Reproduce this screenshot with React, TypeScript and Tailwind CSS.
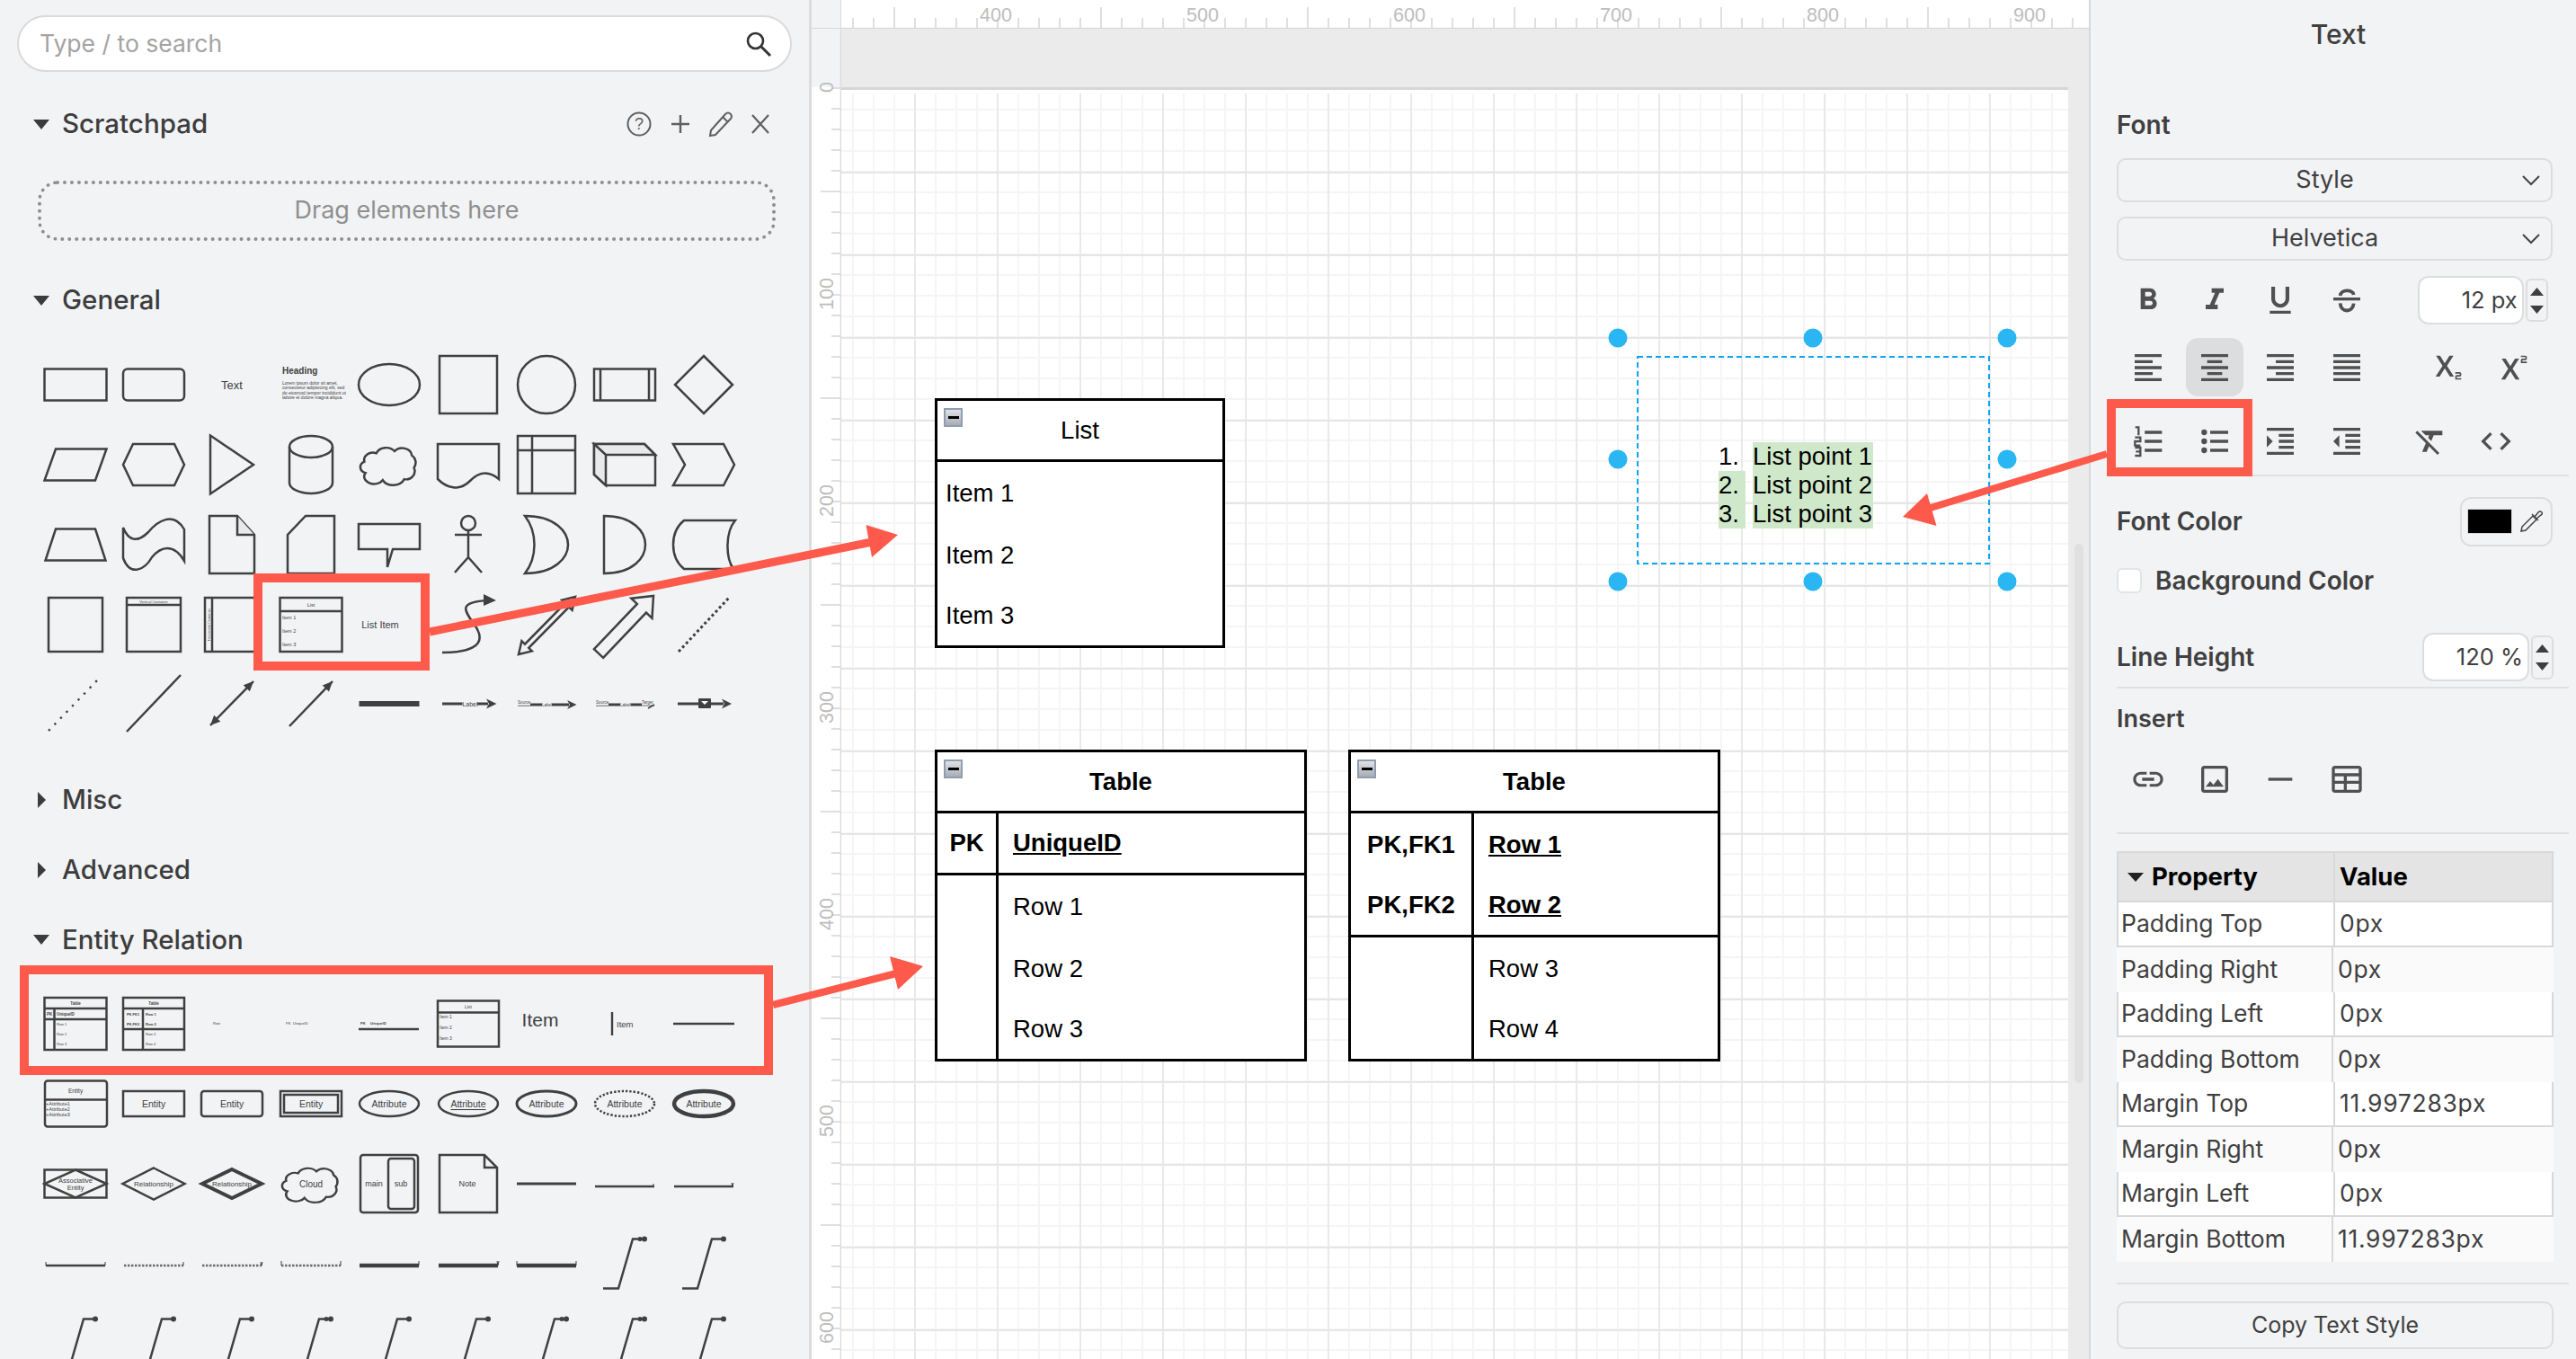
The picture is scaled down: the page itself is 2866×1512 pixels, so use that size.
import React from "react";

const INK = "#404040";
const RED = "#fd5a4c";
const SANS = "Liberation Sans, Arial, sans-serif";

function Lbl(p: { x?: number; y?: number; s: number; a?: "start" | "middle" | "end"; b?: boolean; u?: boolean; c?: string; children: React.ReactNode }) {
  return (
    <text x={p.x ?? 0} y={p.y ?? 0} fontSize={p.s} textAnchor={p.a ?? "middle"} fontWeight={p.b ? 700 : 400} textDecoration={p.u ? "underline" : undefined} fill={p.c ?? INK} stroke="none" fontFamily={SANS} dominantBaseline="central">
      {p.children}
    </text>
  );
}

function Cell({ children, w = 2.5 }: { children?: React.ReactNode; w?: number }) {
  return (
    <svg viewBox="-44 -44 88 88" width="88" height="88" fill="none" stroke={INK} strokeWidth={w} className="overflow-visible">
      {children}
    </svg>
  );
}

function head(x1: number, y1: number, x2: number, y2: number, l = 10, h = 5) {
  const d = Math.hypot(x2 - x1, y2 - y1);
  const ux = (x2 - x1) / d;
  const uy = (y2 - y1) / d;
  const bx = x2 - ux * l;
  const by = y2 - uy * l;
  return `${x2},${y2} ${bx - uy * h},${by + ux * h} ${bx + uy * h},${by - ux * h}`;
}

function Arw({ x1, y1, x2, y2, both }: { x1: number; y1: number; x2: number; y2: number; both?: boolean }) {
  return (
    <g>
      <line x1={x1} y1={y1} x2={x2} y2={y2} />
      <polygon points={head(x1, y1, x2, y2, 11, 5)} fill={INK} stroke="none" />
      {both && <polygon points={head(x2, y2, x1, y1, 11, 5)} fill={INK} stroke="none" />}
    </g>
  );
}

function block(x1: number, y1: number, x2: number, y2: number, sw: number, hw: number, hl: number, both: boolean) {
  const d = Math.hypot(x2 - x1, y2 - y1);
  const ux = (x2 - x1) / d;
  const uy = (y2 - y1) / d;
  const nx = -uy;
  const ny = ux;
  const pt = (t: number, n: number) => `${x1 + ux * t + nx * n},${y1 + uy * t + ny * n}`;
  const pts: string[] = [];
  if (both) {
    pts.push(pt(0, 0), pt(hl, hw), pt(hl, sw));
  } else {
    pts.push(pt(0, sw));
  }
  pts.push(pt(d - hl, sw), pt(d - hl, hw), pt(d, 0), pt(d - hl, -hw), pt(d - hl, -sw));
  if (both) {
    pts.push(pt(hl, -sw), pt(hl, -hw));
  } else {
    pts.push(pt(0, -sw));
  }
  return pts.join(" ");
}

const CLOUD = "M-12 -11 A10 9 0 0 1 5 -13 A9 8 0 0 1 21 -9 A7 8 0 0 1 23 3 A8 8 0 0 1 14 14 A11 9 0 0 1 -6 15 A9 7 0 0 1 -22 8 A7 6 0 0 1 -23 -3 A8 7 0 0 1 -12 -11Z";

const GENERAL: React.ReactNode[] = [
  <Cell><rect x={-34.5} y={-17.5} width={69} height={35} /></Cell>,
  <Cell><rect x={-34} y={-17.5} width={68} height={35} rx={5} /></Cell>,
  <Cell><Lbl s={13}>Text</Lbl></Cell>,
  <Cell>
    <Lbl x={-32} y={-16} s={10} a="start" b>Heading</Lbl>
    <Lbl x={-32} y={-2} s={5} a="start">Lorem ipsum dolor sit amet,</Lbl>
    <Lbl x={-32} y={3} s={5} a="start">consectetur adipisicing elit, sed</Lbl>
    <Lbl x={-32} y={8.5} s={5} a="start">do eiusmod tempor incididunt ut</Lbl>
    <Lbl x={-32} y={13.5} s={5} a="start">labore et dolore magna aliqua.</Lbl>
  </Cell>,
  <Cell><ellipse rx={34} ry={23} /></Cell>,
  <Cell><rect x={-32} y={-32} width={64} height={64} /></Cell>,
  <Cell><circle r={32} /></Cell>,
  <Cell><rect x={-34} y={-17.5} width={68} height={35} /><path d="M-27 -17.5V17.5M27 -17.5V17.5" /></Cell>,
  <Cell><path d="M0 -32L32 0L0 32L-32 0Z" /></Cell>,

  <Cell><path d="M-22 -17.5H34.5L22 17.5H-34.5Z" /></Cell>,
  <Cell><path d="M-23 -23H23L34 0L23 23H-23L-34 0Z" /></Cell>,
  <Cell><path d="M-24 -32.5L24 0L-24 32.5Z" /></Cell>,
  <Cell><path d="M-24 -20A24 12 0 0 1 24 -20V20A24 12 0 0 1 -24 20Z" /><path d="M-24 -20A24 12 0 0 0 24 -20" /></Cell>,
  <Cell><path d={CLOUD} transform="scale(1.2 1.15)" strokeWidth={2.1} /></Cell>,
  <Cell><path d="M-34 -23H34V16C22 6 12 8 2 18C-10 30 -24 26 -34 16Z" /></Cell>,
  <Cell><rect x={-32} y={-32} width={64} height={64} /><path d="M-16 -32V32M-32 -16H32" /></Cell>,
  <Cell><path d="M-34 -23H22L34 -11V23H-21L-34 11Z" /><path d="M-34 -23L-21 -11V23L-34 11Z M-34 -23H22L34 -11H-21Z" fill="#e8e9ea" /></Cell>,
  <Cell><path d="M-34 -23H22L34 0L22 23H-34L-21 0Z" /></Cell>,

  <Cell><path d="M-22 -17.5H22L33.5 17.5H-33.5Z" /></Cell>,
  <Cell><path d="M-34 -19C-28 -4 -18 -2 -6 -14C4 -26 22 -38 34 -17V18C22 -2 8 2 -2 14C-10 28 -26 36 -34 15Z" /></Cell>,
  <Cell><path d="M-25 -32H6L25 -11V32H-25Z" /><path d="M6 -32V-11H25" fill="#e8e9ea" /></Cell>,
  <Cell><path d="M-6 -32H26V32H-26V-11Z" /></Cell>,
  <Cell><path d="M-34 -23H34V5H4L-2 25L-2 5H-34Z" /></Cell>,
  <Cell><ellipse cy={-24} rx={8} ry={8} /><path d="M0 -16V14M-15 -11H15M0 14L-15 31M0 14L15 31" /></Cell>,
  <Cell><path d="M-24 -32C10 -32 24 -14 24 0C24 14 10 32 -24 32C-10 14 -10 -14 -24 -32Z" /></Cell>,
  <Cell><path d="M-23 -32C10 -32 23 -14 23 0C23 14 10 32 -23 32Z" /></Cell>,
  <Cell><path d="M-22 -27H35C24 -14 24 14 33 27H-22C-38 14 -38 -14 -22 -27Z" /></Cell>,

  <Cell><rect x={-30} y={-30} width={60} height={60} /></Cell>,
  <Cell><rect x={-30} y={-30} width={60} height={60} /><path d="M-30 -22H30" /><Lbl y={-26} s={4}>Vertical Container</Lbl></Cell>,
  <Cell><rect x={-30} y={-30} width={60} height={60} /><path d="M-22 -30V30" /><g transform="translate(-26 0) rotate(-90)"><Lbl s={4}>Horizontal Container</Lbl></g></Cell>,
  <Cell><rect x={-34.5} y={-30} width={69} height={60} /><path d="M-34.5 -15H34.5" /><Lbl y={-22.5} s={5.5}>List</Lbl><Lbl x={-32} y={-8} s={5.5} a="start">Item 1</Lbl><Lbl x={-32} y={7} s={5.5} a="start">Item 2</Lbl><Lbl x={-32} y={21.5} s={5.5} a="start">Item 3</Lbl></Cell>,
  <Cell><Lbl x={-10} s={11}>List Item</Lbl></Cell>,
  <Cell><path d="M-29 31C0 31 20 24 10 5C0 -12 -18 -25 22 -27" /><polygon points="31,-27 17,-34 17,-21" fill={INK} stroke="none" /></Cell>,
  <Cell><polygon points={block(-31, 33, 32, -31, 3, 8, 13, true)} /></Cell>,
  <Cell><polygon points={block(-29, 32, 32, -32, 7, 16, 19, false)} /></Cell>,
  <Cell w={3}><line x1={-28} y1={30} x2={29} y2={-31} strokeDasharray="3 3" /></Cell>,

  <Cell w={2.4}><line x1={-30} y1={30} x2={27} y2={-29} strokeDasharray="2.4 7" /></Cell>,
  <Cell><line x1={-30} y1={31} x2={30} y2={-32} /></Cell>,
  <Cell><Arw x1={-24} y1={24} x2={24} y2={-25} both /></Cell>,
  <Cell><Arw x1={-24} y1={25} x2={24} y2={-25} /></Cell>,
  <Cell w={6}><line x1={-33.5} x2={33.5} /></Cell>,
  <Cell w={3.2}><path d="M-29 0H-6.5M10 0H22" /><polygon points="31.5,0 20,-5.5 23,0 20,5.5" fill={INK} stroke="none" /><Lbl x={2} s={7}>Label</Lbl></Cell>,
  <Cell w={3.2}><path d="M-18 1H-5M6 1H25" /><path d="M-32 2.2H-18" strokeWidth={1} stroke="#6a6a6a" /><polygon points="33.5,1 23,-4 26,1 23,6" fill={INK} stroke="none" /><Lbl x={-32} y={-2} s={4.5} a="start">Source</Lbl><Lbl x={0.5} y={1} s={4.5}>Label</Lbl></Cell>,
  <Cell w={3.2}><path d="M-18 1H-5M6.5 1H19" /><path d="M-32 2.2H-18M19 2H33" strokeWidth={1} stroke="#6a6a6a" /><path d="M33 1L26 5" strokeWidth={1.5} /><Lbl x={-32} y={-2} s={4.5} a="start">Source</Lbl><Lbl x={0.5} y={1} s={4.5}>Label</Lbl><Lbl x={19} y={-2} s={4.5} a="start">Target</Lbl></Cell>,
  <Cell w={3.2}><path d="M-29 0H-6M8 0H22" /><polygon points="31,0 20,-5.5 23,0 20,5.5" fill={INK} stroke="none" /><rect x={-6} y={-6} width={14} height={11} rx={1} fill={INK} stroke="none" /><polygon points="-3,-3 5,-3 1,1" fill="#fff" stroke="none" /></Cell>,
];

function Elbow({ dark }: { dark?: boolean }) {
  return (
    <Cell>
      <path d="M-24 27.5H-7L9 -27.5H20" />
      <circle cx={22} cy={-27.5} r={3} fill={INK} stroke="none" />
      {dark && <circle cx={17} cy={-27.5} r={2.5} fill={INK} stroke="none" />}
    </Cell>
  );
}

function Ell({ t, d, w = 2.5, u }: { t: string; d?: string; w?: number; u?: boolean }) {
  return (
    <Cell w={w}>
      <ellipse rx={33} ry={14} strokeDasharray={d} />
      <Lbl s={10.5} u={u}>{t}</Lbl>
    </Cell>
  );
}

const ER: React.ReactNode[] = [
  <Cell><rect x={-34.5} y={-29} width={69} height={58} /><path d="M-34.5 -17H34.5M-34.5 -5H34.5M-23.5 -17V29" /><Lbl y={-23} s={4.5} b>Table</Lbl><Lbl x={-29} y={-11} s={4.5} b>PK</Lbl><Lbl x={-21} y={-11} s={4.5} a="start" b>UniqueID</Lbl><Lbl x={-21} y={0} s={4} a="start">Row 1</Lbl><Lbl x={-21} y={11} s={4} a="start">Row 2</Lbl><Lbl x={-21} y={22} s={4} a="start">Row 3</Lbl></Cell>,
  <Cell><rect x={-34} y={-29} width={68} height={58} /><path d="M-34 -17H34M-34 6H34M-12 -17V29" /><Lbl y={-23} s={4.5} b>Table</Lbl><Lbl x={-23} y={-11} s={4} b>PK,FK1</Lbl><Lbl x={-23} y={0} s={4} b>PK,FK2</Lbl><Lbl x={-9} y={-11} s={4} a="start" b>Row 1</Lbl><Lbl x={-9} y={0} s={4} a="start" b>Row 2</Lbl><Lbl x={-9} y={11} s={4} a="start">Row 3</Lbl><Lbl x={-9} y={22} s={4} a="start">Row 4</Lbl></Cell>,
  <Cell><Lbl x={-17} y={-1} s={4}>Row</Lbl></Cell>,
  <Cell><Lbl x={-28} y={-1} s={4} a="start">PK</Lbl><Lbl x={-20} y={-1} s={4} a="start">UniqueID</Lbl></Cell>,
  <Cell><path d="M-34 6H33" /><Lbl x={-32} y={-1} s={4} a="start" b>PK</Lbl><Lbl x={-21} y={-1} s={4} a="start" b>UniqueID</Lbl></Cell>,
  <Cell><rect x={-34} y={-25.5} width={68} height={51} /><path d="M-34 -12.5H34" /><Lbl y={-19} s={5}>List</Lbl><Lbl x={-32} y={-8} s={5} a="start">Item 1</Lbl><Lbl x={-32} y={4} s={5} a="start">Item 2</Lbl><Lbl x={-32} y={16} s={5} a="start">Item 3</Lbl></Cell>,
  <Cell><Lbl x={-7} y={-5} s={21}>Item</Lbl></Cell>,
  <Cell w={2.4}><line x1={-14} y1={-13} x2={-14} y2={13} /><Lbl x={-9} s={9.5} a="start">Item</Lbl></Cell>,
  <Cell w={2.6}><line x1={-34} x2={34} /></Cell>,

  <Cell><rect x={-34} y={-25.5} width={69} height={51} rx={3} /><path d="M-34 -4.5H35" /><Lbl x={0} y={-15} s={6.5}>Entity</Lbl><Lbl x={-33} y={0} s={5.5} a="start">+Attribute1</Lbl><Lbl x={-33} y={6} s={5.5} a="start">+Attribute2</Lbl><Lbl x={-33} y={12} s={5.5} a="start">+Attribute3</Lbl></Cell>,
  <Cell><rect x={-34} y={-14} width={68} height={28} /><Lbl s={10.5}>Entity</Lbl></Cell>,
  <Cell><rect x={-34} y={-14} width={68} height={28} rx={3} /><Lbl s={10.5}>Entity</Lbl></Cell>,
  <Cell><rect x={-34} y={-14} width={68} height={28} /><rect x={-30} y={-10} width={60} height={20} /><Lbl s={10.5}>Entity</Lbl></Cell>,
  <Ell t="Attribute" />,
  <Ell t="Attribute" u />,
  <Ell t="Attribute" w={3} />,
  <Ell t="Attribute" d="2.3 2" />,
  <Ell t="Attribute" w={4.5} />,

  <Cell><rect x={-34.5} y={-15.5} width={69} height={31} /><path d="M0 -15.5L34.5 0L0 15.5L-34.5 0Z" /><Lbl y={-4} s={7.5}>Associative</Lbl><Lbl y={4} s={7.5}>Entity</Lbl></Cell>,
  <Cell><path d="M0 -17.5L34.5 0L0 17.5L-34.5 0Z" /><Lbl s={8}>Relationship</Lbl></Cell>,
  <Cell w={4}><path d="M0 -16L33 0L0 16L-33 0Z" /><Lbl s={8}>Relationship</Lbl></Cell>,
  <Cell><path d={CLOUD} transform="scale(1.2 1.05)" strokeWidth={2.1} /><Lbl s={10}>Cloud</Lbl></Cell>,
  <Cell><rect x={-32} y={-32} width={64} height={64} rx={3} /><rect x={-1} y={-28} width={29} height={56} rx={3} /><Lbl x={-17} s={9}>main</Lbl><Lbl x={13} s={9}>sub</Lbl></Cell>,
  <Cell><path d="M-32 -32H18L32 -18V32H-32Z" /><path d="M18 -32V-18H32" /><Lbl x={-1} s={9}>Note</Lbl></Cell>,
  <Cell w={3}><line x1={-33} x2={33} /></Cell>,
  <Cell><line x1={-33} y1={3} x2={33} y2={3} /><path d="M32 0V3" strokeWidth={1} /></Cell>,
  <Cell><line x1={-33} y1={3} x2={33} y2={3} /><path d="M31 -1L32 3L33 -1" strokeWidth={1} /></Cell>,

  <Cell><line x1={-33} y1={2} x2={33} y2={2} /><path d="M-33 -2V2M33 -2V2" strokeWidth={1} /></Cell>,
  <Cell><line x1={-33} y1={2} x2={33} y2={2} strokeDasharray="2.5 1.5" stroke="#6a6a6a" /><path d="M33 -2V2" strokeWidth={1} /></Cell>,
  <Cell><line x1={-33} y1={2} x2={33} y2={2} strokeDasharray="2.5 1.5" stroke="#6a6a6a" /><path d="M32 -2L33 2L34 -2" strokeWidth={1} /></Cell>,
  <Cell><line x1={-33} y1={2} x2={33} y2={2} strokeDasharray="2.5 1.5" stroke="#6a6a6a" /><path d="M-33 -3V2M33 -3V2" strokeWidth={1} /></Cell>,
  <Cell w={4.5}><line x1={-33} y1={2} x2={33} y2={2} /><path d="M33 -3V2" strokeWidth={1} /></Cell>,
  <Cell w={4.5}><line x1={-33} y1={2} x2={33} y2={2} /><path d="M32 -3L33 2L34 -3" strokeWidth={1} /></Cell>,
  <Cell w={4.5}><line x1={-33} y1={2} x2={33} y2={2} /><path d="M-33 -3V2M33 -3V2" strokeWidth={1} /></Cell>,
  <Elbow dark />,
  <Elbow />,

  <Elbow />, <Elbow />, <Elbow />, <Elbow dark />, <Elbow />, <Elbow />, <Elbow dark />, <Elbow dark />, <Elbow />,
];

function Caret({ open = true }: { open?: boolean }) {
  return open ? (
    <svg width="18" height="11" viewBox="0 0 18 11" className="shrink-0"><polygon points="0,0 18,0 9,11" fill="#3b3b3b" /></svg>
  ) : (
    <svg width="18" height="18" viewBox="0 0 18 18" className="shrink-0"><polygon points="5,0 14,9 5,18" fill="#3b3b3b" /></svg>
  );
}

function SectionHead({ title, open = true, children }: { title: string; open?: boolean; children?: React.ReactNode }) {
  return (
    <div className="flex h-[50px] items-center pl-[37px] pr-[19px]">
      <Caret open={open} />
      <span className="ml-[14px] text-[29.5px] font-medium leading-none text-[#3d3d3d]">{title}</span>
      {children}
    </div>
  );
}

function Sidebar() {
  return (
    <aside className="flex h-full w-[903px] shrink-0 flex-col overflow-hidden border-r-[3px] border-[#dcdcdc] bg-[#f2f3f5]">
      <div className="mx-[19px] mt-[17px] flex h-[63px] shrink-0 items-center rounded-full border-2 border-[#dadada] bg-white pl-[23px] pr-[20px]">
        <span className="flex-1 text-[26.5px] text-[#a3a3a3]">Type / to search</span>
        <svg width="30" height="30" viewBox="0 0 30 30" fill="none" stroke="#333" strokeWidth="2.6"><circle cx="11.5" cy="11.5" r="8.5" /><path d="M17.5 17.5L28 28" strokeWidth="3" /></svg>
      </div>
      <div className="mt-[33px] shrink-0">
        <SectionHead title="Scratchpad">
          <span className="ml-auto flex items-center pr-[13px]">
            <svg width="46" height="30" viewBox="-23 -15 46 30" fill="none" stroke="#5f5f5f" strokeWidth="2"><circle r="12.5" /><Lbl s={18} c="#5f5f5f">?</Lbl></svg>
            <svg width="46" height="30" viewBox="-23 -15 46 30" fill="none" stroke="#5f5f5f" strokeWidth="2.4"><path d="M-10 0H10M0 -10V10" /></svg>
            <svg width="44" height="30" viewBox="-22 -15 44 30" fill="none" stroke="#5f5f5f" strokeWidth="2"><path d="M-11 7L5 -11Q8 -14 11 -11Q13 -8 11 -6L-6 12L-12 13Z" /><path d="M2 -8L8 -2" /></svg>
            <svg width="44" height="30" viewBox="-22 -15 44 30" fill="none" stroke="#5f5f5f" strokeWidth="2.2"><path d="M-9 -10L9 10M9 -10L-9 10" /></svg>
          </span>
        </SectionHead>
      </div>
      <div className="ml-[42px] mr-[37px] mt-[38px] flex h-[67px] shrink-0 items-center justify-center rounded-[22px] border-[4px] border-dotted border-[#8e8e8e]">
        <span className="text-[27px] text-[#8f8f8f]">Drag elements here</span>
      </div>
      <div className="mt-[41px] shrink-0"><SectionHead title="General" /></div>
      <div className="ml-[40px] mt-[25px] grid shrink-0 grid-cols-[repeat(9,87.4px)] auto-rows-[88.75px] place-items-center">
        {GENERAL.map((g, i) => <div key={i}>{g}</div>)}
      </div>
      <div className="mt-[37px] shrink-0"><SectionHead title="Misc" open={false} /></div>
      <div className="mt-[28px] shrink-0"><SectionHead title="Advanced" open={false} /></div>
      <div className="mt-[28px] shrink-0"><SectionHead title="Entity Relation" /></div>
      <div className="ml-[40px] mt-[24px] grid shrink-0 grid-cols-[repeat(9,87.4px)] auto-rows-[89px] place-items-center">
        {ER.map((g, i) => <div key={i}>{g}</div>)}
      </div>
    </aside>
  );
}

function TopRuler() {
  const ticks: number[] = [];
  for (let x = 13; x < 1380; x += 23) ticks.push(x);
  return (
    <svg width="1388" height="32" className="block">
      {ticks.map((x) => {
        const abs = x + 936;
        const long = (((abs - 995) % 230) + 230) % 230 === 0;
        return <line key={x} x1={x} x2={x} y1={long ? 8 : 20} y2={31} stroke="#d4d4d4" strokeWidth="1.5" />;
      })}
      {[400, 500, 600, 700, 800, 900].map((n, i) => (
        <text key={n} x={1090 - 936 + i * 230} y={24} fontSize="21.5" fill="#bdbdbd" fontFamily={SANS}>{n}</text>
      ))}
      <line x1="0" x2="1388" y1="31.5" y2="31.5" stroke="#d9d9d9" strokeWidth="1.5" />
    </svg>
  );
}

function LeftRuler() {
  const ticks: number[] = [];
  for (let y = 66; y < 1480; y += 23) ticks.push(y);
  return (
    <svg width="33" height="1480" className="block">
      <rect x="0" y="0" width="33" height="65" fill="#f1f3f5" />
      <rect x="0" y="65" width="33" height="1415" fill="#ffffff" />
      {ticks.map((y) => {
        const long = (y + 32 - 212) % 230 === 0 || (y + 32 - 213) % 230 === 0;
        return <line key={y} x1={long ? 10 : 22} x2={33} y1={y} y2={y} stroke="#d4d4d4" strokeWidth="1.5" />;
      })}
      {[0, 100, 200, 300, 400, 500, 600].map((n, i) => (
        <text key={n} transform={`translate(24 ${65 + i * 230}) rotate(-90)`} textAnchor="middle" fontSize="21.5" fill="#bdbdbd" fontFamily={SANS}>{n}</text>
      ))}
      <line x1="32.5" x2="32.5" y1="0" y2="1480" stroke="#d9d9d9" strokeWidth="1.5" />
    </svg>
  );
}

function Grid() {
  const minorX: number[] = [];
  const minorY: number[] = [];
  const majorX: number[] = [];
  const majorY: number[] = [];
  for (let x = 13; x < 1365; x += 23) minorX.push(x);
  for (let y = 22; y < 1415; y += 23) minorY.push(y);
  for (let x = 82; x < 1365; x += 92) majorX.push(x);
  for (let y = 92; y < 1415; y += 92) majorY.push(y);
  return (
    <svg width="1365" height="1415" className="block">
      {minorX.map((x) => <line key={x} x1={x} x2={x} y1={4} y2={1415} stroke="#f5f5f5" strokeWidth="2" />)}
      {minorY.map((y) => <line key={y} x1={0} x2={1365} y1={y} y2={y} stroke="#f5f5f5" strokeWidth="2" />)}
      {majorX.map((x) => <line key={x} x1={x} x2={x} y1={4} y2={1415} stroke="#e6e6e6" strokeWidth="1.6" />)}
      {majorY.map((y) => <line key={y} x1={0} x2={1365} y1={y} y2={y} stroke="#e6e6e6" strokeWidth="2" />)}
    </svg>
  );
}

function Collapse() {
  return (
    <span className="absolute left-[7px] top-[8px] flex h-[21px] w-[21px] items-center justify-center border-2 border-[#8f9db0] bg-gradient-to-b from-[#e0e2e6] to-[#a9acb4]">
      <span className="h-[3px] w-[12px] bg-black" />
    </span>
  );
}

const CANVAS_TEXT = "font-['Liberation_Sans',Arial,sans-serif] text-[27.5px] leading-none text-black";

function ListShape() {
  return (
    <div className={`absolute left-[104px] top-[411px] w-[323px] border-[3px] border-black bg-white ${CANVAS_TEXT}`}>
      <div className="relative flex h-[68px] items-center justify-center border-b-[3px] border-black"><Collapse />List</div>
      {["Item 1", "Item 2", "Item 3"].map((t, i) => <div key={t} className={`flex items-center pl-[9px] ${i === 2 ? "h-[66px]" : "h-[69px]"}`}>{t}</div>)}
    </div>
  );
}

function TableRow({ l, r, w, b, last }: { l?: string; r: string; w: number; b?: boolean; last?: boolean }) {
  return (
    <div className={`flex ${last ? "h-[66px]" : "h-[69px]"}`}>
      <div className={`flex shrink-0 items-center justify-center border-r-[3px] border-black ${b ? "font-bold" : ""}`} style={{ width: w }}>{l}</div>
      <div className={`flex items-center pl-[16px] ${b ? "font-bold underline" : ""}`}>{r}</div>
    </div>
  );
}

function TableShape({ left, w, groups }: { left: string; w: number; groups: { l?: string; r: string; b?: boolean }[][] }) {
  return (
    <div className={`absolute top-[802px] w-[414px] border-[3px] border-black bg-white ${left} ${CANVAS_TEXT}`}>
      <div className="relative flex h-[68px] items-center justify-center border-b-[3px] border-black font-bold"><Collapse />Table</div>
      {groups.map((g, i) => (
        <div key={i} className={i < groups.length - 1 ? "border-b-[3px] border-black" : ""}>
          {g.map((r, j) => <TableRow key={r.r} l={r.l} r={r.r} b={r.b} w={w} last={j === g.length - 1} />)}
        </div>
      ))}
    </div>
  );
}

function Handle({ x, y }: { x: number; y: number }) {
  return <span className="absolute h-[21px] w-[21px] -translate-x-1/2 -translate-y-1/2 rounded-full bg-[#29b6f2]" style={{ left: x - 936, top: y - 32 }} />;
}

function Canvas() {
  return (
    <main className="relative flex h-full min-w-0 flex-1 flex-col overflow-hidden bg-[#ebebeb]">
      <div className="flex h-[32px] shrink-0">
        <div className="h-[32px] w-[33px] shrink-0 border-b-[1.5px] border-r-[1.5px] border-[#d9d9d9] bg-[#f1f3f5]" />
        <div className="flex-1 bg-white"><TopRuler /></div>
      </div>
      <div className="flex min-h-0 flex-1">
        <div className="w-[33px] shrink-0"><LeftRuler /></div>
        <div className="relative min-w-0 flex-1">
          <div className="mt-[65px] flex">
            <div className="w-[1365px] shrink-0 border-t-[3px] border-[#d6d6d6] bg-white"><Grid /></div>
          </div>
          <ListShape />
          <TableShape left="left-[104px]" w={68} groups={[[{ l: "PK", r: "UniqueID", b: true }], [{ r: "Row 1" }, { r: "Row 2" }, { r: "Row 3" }]]} />
          <TableShape left="left-[564px]" w={137} groups={[[{ l: "PK,FK1", r: "Row 1", b: true }, { l: "PK,FK2", r: "Row 2", b: true }], [{ r: "Row 3" }, { r: "Row 4" }]]} />
          <svg width="395" height="233" className="absolute left-[885px] top-[364px]">
            <rect x="1" y="1" width="391" height="230" fill="none" stroke="#0ea5f5" strokeWidth="2" strokeDasharray="6 4" />
          </svg>
          <div className={`absolute left-[976px] top-[460px] w-[180px] ${CANVAS_TEXT}`}>
            {["1.", "2.", "3."].map((n, i) => (
              <div key={n} className="flex h-[32px] items-center">
                <span className={`flex h-full w-[30px] items-center ${i > 0 ? "bg-[#cfe8c9]" : ""}`}>{n}</span>
                <span className="ml-[8px] flex h-full items-center bg-[#cfe8c9] pr-[1px]">List point {i + 1}</span>
              </div>
            ))}
          </div>
          {[1800, 2017, 2232.5].flatMap((x) => [375.5, 511, 647].filter((y) => !(x === 2017 && y === 511)).map((y) => <Handle key={`${x}-${y}`} x={x} y={y} />))}
          <span className="absolute left-[1372px] top-[573px] h-[600px] w-[10px] rounded-[5px] bg-[#e0e0e0]" />
        </div>
      </div>
    </main>
  );
}

function M({ d }: { d: string }) {
  return (
    <svg width="40" height="40" viewBox="0 0 24 24" fill="#505050" className="block shrink-0"><path d={d} /></svg>
  );
}

const ICON = {
  b: "M15.6 10.79c.97-.67 1.65-1.77 1.65-2.79 0-2.26-1.75-4-4-4H7v14h7.04c2.09 0 3.71-1.7 3.71-3.79 0-1.52-.86-2.82-2.15-3.42zM10 6.5h3c.83 0 1.5.67 1.5 1.5s-.67 1.5-1.5 1.5h-3v-3zm3.5 9H10v-3h3.5c.83 0 1.5.67 1.5 1.5s-.67 1.5-1.5 1.5z",
  i: "M10 4v3h2.21l-3.42 8H6v3h8v-3h-2.21l3.42-8H18V4z",
  u: "M12 17c3.31 0 6-2.69 6-6V3h-2.5v8c0 1.93-1.57 3.5-3.5 3.5S8.5 12.93 8.5 11V3H6v8c0 3.31 2.69 6 6 6zm-7 2v2h14v-2H5z",
  al: "M15 15H3v2h12v-2zm0-8H3v2h12V7zM3 13h18v-2H3v2zm0 8h18v-2H3v2zM3 3v2h18V3H3z",
  ac: "M7 15v2h10v-2H7zm-4 6h18v-2H3v2zm0-8h18v-2H3v2zm4-6v2h10V7H7zM3 3v2h18V3H3z",
  ar: "M3 21h18v-2H3v2zm6-4h12v-2H9v2zm-6-4h18v-2H3v2zm6-4h12V7H9v2zM3 3v2h18V3H3z",
  aj: "M3 21h18v-2H3v2zM3 17h18v-2H3v2zM3 13h18v-2H3v2zM3 9h18V7H3v2zM3 3v2h18V3H3z",
  sub: "M22 18h-2v1h3v1h-4v-2c0-.55.45-1 1-1h2v-1h-3v-1h3c.55 0 1 .45 1 1v1c0 .55-.45 1-1 1zM5.88 18h2.66l3.4-5.42h.12l3.4 5.42h2.66l-4.65-7.27L17.81 4h-2.68l-3.07 4.99h-.12L8.85 4H6.19l4.32 6.73L5.88 18z",
  sup: "M22 7h-2v1h3v1h-4V7c0-.55.45-1 1-1h2V5h-3V4h3c.55 0 1 .45 1 1v1c0 .55-.45 1-1 1zM5.88 20h2.66l3.4-5.42h.12l3.4 5.42h2.66l-4.65-7.27L17.81 6h-2.68l-3.07 4.99h-.12L8.85 6H6.19l4.32 6.73L5.88 20z",
  ind: "M3 21h18v-2H3v2zM3 8v8l4-4-4-4zm8 9h10v-2H11v2zM3 3v2h18V3H3zm8 6h10V7H11v2zm0 4h10v-2H11v2z",
  out: "M11 17h10v-2H11v2zm-8-5l4 4V8l-4 4zm0 9h18v-2H3v2zM3 3v2h18V3H3zm8 6h10V7H11v2zm0 4h10v-2H11v2z",
  clr: "M3.27 5L2 6.27l6.97 6.97L6.5 19h3l1.57-3.66L16.73 21 18 19.73 3.55 5.27 3.27 5zM6 5v.18L8.82 8h2.4l-.72 1.68 2.1 2.1L14.21 8H20V5H6z",
  code: "M9.4 16.6L4.8 12l4.6-4.6L8 6l-6 6 6 6 1.4-1.4zm5.2 0l4.6-4.6-4.6-4.6L16 6l6 6-6 6-1.4-1.4z",
  link: "M3.9 12c0-1.71 1.39-3.1 3.1-3.1h4V7H7c-2.76 0-5 2.24-5 5s2.24 5 5 5h4v-1.9H7c-1.71 0-3.1-1.39-3.1-3.1zM8 13h8v-2H8v2zm9-6h-4v1.9h4c1.71 0 3.1 1.39 3.1 3.1s-1.39 3.1-3.1 3.1h-4V17h4c2.76 0 5-2.24 5-5s-2.24-5-5-5z",
  img: "M19 5v14H5V5h14m0-2H5c-1.1 0-2 .9-2 2v14c0 1.1.9 2 2 2h14c1.1 0 2-.9 2-2V5c0-1.1-.9-2-2-2zm-4.86 8.86l-3 3.87L9 13.14 6 17h12l-3.86-5.14z",
  hr: "M4 11h16v2H4z",
  tbl: "M20 3H4c-1.1 0-2 .9-2 2v14c0 1.1.9 2 2 2h16c1.1 0 2-.9 2-2V5c0-1.1-.9-2-2-2zm0 2v3H4V5h16zm-10 14H4v-4h6v4zm0-6H4v-3h6v3zm2 6v-4h8v4h-8zm8-6h-8v-3h8v3z",
};

function Tool({ d, active }: { d: string; active?: boolean }) {
  return (
    <div className="flex w-[73.7px] shrink-0 items-center justify-center">
      <div className={`flex h-[65px] w-[64px] items-center justify-center rounded-[14px] ${active ? "bg-[#dcdddf]" : ""}`}><M d={d} /></div>
    </div>
  );
}

function StrikeTool() {
  return (
    <div className="flex w-[73.7px] shrink-0 items-center justify-center">
      <svg width="40" height="40" viewBox="0 0 24 24" fill="none" stroke="#505050" className="block">
        <path d="M3 11.2H21" strokeWidth="2" />
        <path d="M7.6 9C8 4.6 16 4.6 16.6 8.4" strokeWidth="2.3" />
        <path d="M7.6 14C8 20.5 16 20.5 16.6 14.2" strokeWidth="2.3" />
      </svg>
    </div>
  );
}

function OrderedTool() {
  return (
    <div className="flex w-[73.7px] shrink-0 items-center justify-center">
      <svg width="40" height="40" viewBox="0 0 24 24" fill="none" stroke="#505050" className="block">
        <path d="M9.7 6H21.2M9.7 12H21.2M9.7 18H21.2" strokeWidth="2" />
        <path d="M3.4 2.6H5.6V8M3.2 9.4H6.8V12H3.2V14.8H6.8M3.2 16.2H6.8V18.8H3.8M6.8 18.8V21.6H3.2" strokeWidth="1.4" />
      </svg>
    </div>
  );
}

function BulletTool() {
  return (
    <div className="flex w-[73.7px] shrink-0 items-center justify-center">
      <svg width="40" height="40" viewBox="0 0 24 24" className="block">
        <path d="M9 6H21M9 12H21M9 18H21" stroke="#505050" strokeWidth="2" />
        <circle cx="5" cy="6" r="1.9" fill="#505050" />
        <circle cx="5" cy="12" r="1.9" fill="#505050" />
        <circle cx="5" cy="18" r="1.9" fill="#505050" />
      </svg>
    </div>
  );
}

function Select({ label }: { label: string }) {
  return (
    <div className="relative flex h-[49px] w-[485px] items-center justify-center rounded-[10px] border-2 border-[#dcdddf] text-[27px] text-[#404040]">
      <span className="mr-[22px]">{label}</span>
      <svg width="20" height="12" viewBox="0 0 20 12" fill="none" stroke="#444" strokeWidth="2" className="absolute right-[12px] top-[17px]"><path d="M1 1L10 10L19 1" /></svg>
    </div>
  );
}

function Stepper({ h }: { h: string }) {
  return (
    <div className={`ml-[2px] flex w-[25px] flex-col items-center justify-center gap-[11px] rounded-[6px] border-2 border-[#dcdddf] ${h}`}>
      <svg width="15" height="9" viewBox="0 0 15 9"><polygon points="7.5,0 15,9 0,9" fill="#3f3f3f" /></svg>
      <svg width="15" height="9" viewBox="0 0 15 9"><polygon points="0,0 15,0 7.5,9" fill="#3f3f3f" /></svg>
    </div>
  );
}

const ROWS = [
  ["Padding Top", "0px"],
  ["Padding Right", "0px"],
  ["Padding Left", "0px"],
  ["Padding Bottom", "0px"],
  ["Margin Top", "11.997283px"],
  ["Margin Right", "0px"],
  ["Margin Left", "0px"],
  ["Margin Bottom", "11.997283px"],
];

function Panel() {
  return (
    <aside className="flex h-full w-[542px] shrink-0 flex-col border-l-2 border-[#d8d8d8] bg-[#f2f3f5] pl-[29px] pr-[8px] text-[#404040]">
      <div className="flex h-[76px] shrink-0 items-center justify-center pr-[10px] text-[30px] font-medium">Text</div>
      <div className="mt-[40px] flex h-[46px] shrink-0 items-center text-[28px] font-semibold">Font</div>
      <div className="mt-[14px] shrink-0"><Select label="Style" /></div>
      <div className="mt-[16px] shrink-0"><Select label="Helvetica" /></div>
      <div className="mt-[12px] flex h-[64px] shrink-0 items-center">
        <div className="-ml-[2px] flex"><Tool d={ICON.b} /><Tool d={ICON.i} /><Tool d={ICON.u} /><StrikeTool /></div>
        <div className="ml-[42px] flex h-[54px] w-[118px] items-center justify-end rounded-[12px] border-2 border-[#dcdddf] bg-white pr-[5px] text-[25.5px]">12 px</div>
        <Stepper h="h-[48px]" />
      </div>
      <div className="mt-[10px] flex h-[65px] shrink-0 items-center">
        <div className="-ml-[2px] flex"><Tool d={ICON.al} /><Tool d={ICON.ac} active /><Tool d={ICON.ar} /><Tool d={ICON.aj} /></div>
        <div className="ml-[35px] flex"><Tool d={ICON.sub} /><Tool d={ICON.sup} /></div>
      </div>
      <div className="mt-[18px] flex h-[64px] shrink-0 items-center">
        <div className="-ml-[2px] flex"><OrderedTool /><BulletTool /><Tool d={ICON.ind} /><Tool d={ICON.out} /></div>
        <div className="ml-[19px] flex"><Tool d={ICON.clr} /><Tool d={ICON.code} /></div>
      </div>
      <div className="mt-[5px] h-[2px] shrink-0 bg-[#dfe0e2]" />
      <div className="mt-[22px] flex h-[56px] w-[485px] shrink-0 items-center justify-between">
        <span className="text-[28px] font-semibold">Font Color</span>
        <div className="flex h-[55px] w-[103px] items-center rounded-[12px] border-2 border-[#dcdddf] pl-[6px]">
          <span className="h-[28px] w-[50px] border border-[#d8d8d8] bg-black" />
          <svg width="26" height="26" viewBox="0 0 26 26" fill="none" stroke="#444" strokeWidth="1.5" className="ml-[8px]"><path d="M2 24L3 19L15 7L19 11L7 23Z" /><path d="M14 5L21 12M17 8L21 3Q23 1 25 3Q26 5 24 6L18 11" /></svg>
        </div>
      </div>
      <div className="mt-[24px] flex h-[28px] shrink-0 items-center">
        <span className="h-[28px] w-[28px] rounded-[6px] border-2 border-[#e3e4e6] bg-white" />
        <span className="ml-[15px] text-[28px] font-semibold">Background Color</span>
      </div>
      <div className="mt-[44px] flex h-[54px] w-[486px] shrink-0 items-center">
        <span className="text-[28px] font-semibold">Line Height</span>
        <div className="ml-auto flex h-[54px] w-[119px] items-center justify-end rounded-[12px] border-2 border-[#dcdddf] bg-white pr-[5px] text-[25.5px]">120 %</div>
        <Stepper h="h-[49px]" />
      </div>
      <div className="mt-[6px] h-[2px] shrink-0 bg-[#dfe0e2]" />
      <div className="mt-[14px] flex h-[40px] shrink-0 items-center text-[27px] font-semibold">Insert</div>
      <div className="-ml-[2px] mt-[25px] flex h-[44px] shrink-0 items-center">
        <Tool d={ICON.link} /><Tool d={ICON.img} /><Tool d={ICON.hr} /><Tool d={ICON.tbl} />
      </div>
      <div className="mt-[37px] h-[2px] shrink-0 bg-[#dfe0e2]" />
      <div className="mt-[19px] w-[486px] shrink-0">
        <div className="flex h-[57px] border-2 border-[#d8d8d8] bg-[#e4e4e4] text-[27.5px] font-bold text-black">
          <div className="flex w-[241px] items-center border-r-2 border-[#d8d8d8] pl-[10px]">
            <svg width="18" height="10" viewBox="0 0 18 10"><polygon points="0,0 18,0 9,10" fill="#222" /></svg>
            <span className="ml-[9px]">Property</span>
          </div>
          <div className="flex items-center pl-[5px]">Value</div>
        </div>
        {ROWS.map(([a, b], i) => (
          <div key={a} className={`flex h-[50px] text-[26.5px] ${i % 2 === 0 ? "border-x-2 border-b-2 border-t-0 border-[#d8d8d8] bg-white" : "bg-[#fafafa]"}`}>
            <div className={`flex w-[241px] shrink-0 items-center border-r-2 border-[#d8d8d8] ${i % 2 === 0 ? "pl-[3px]" : "pl-[5px]"}`}>{a}</div>
            <div className="flex items-center pl-[5px] tracking-[0.7px]">{b}</div>
          </div>
        ))}
      </div>
      <div className="mt-[23px] h-[2px] shrink-0 bg-[#dfe0e2]" />
      <div className="mt-[19px] flex h-[53px] w-[486px] shrink-0 items-center justify-center rounded-[10px] border-2 border-[#dcdddf] text-[25px]">Copy Text Style</div>
    </aside>
  );
}

function Annotations() {
  return (
    <svg width="2866" height="1512" viewBox="0 0 2866 1512" className="pointer-events-none absolute left-0 top-0" fill="none">
      <rect x="287" y="643" width="186" height="98" stroke={RED} strokeWidth="10" />
      <rect x="27" y="1079" width="828" height="112" stroke={RED} strokeWidth="10" />
      <rect x="2349" y="449" width="152" height="76" stroke={RED} strokeWidth="10" />
      <line x1="478" y1="703" x2="975" y2="602" stroke={RED} strokeWidth="9" />
      <polygon points="999,595 963.5,584 970,620" fill={RED} />
      <line x1="860" y1="1118" x2="1005" y2="1081" stroke={RED} strokeWidth="8" />
      <polygon points="1027,1075 990,1064 999,1101" fill={RED} />
      <line x1="2344" y1="505" x2="2138" y2="568" stroke={RED} strokeWidth="8" />
      <polygon points="2117,575 2144,549 2154.5,585" fill={RED} />
    </svg>
  );
}

export default function App() {
  return (
    <div className="relative flex h-[1512px] w-[2866px] overflow-hidden font-['Inter',sans-serif]">
      <Sidebar />
      <Canvas />
      <Panel />
      <Annotations />
    </div>
  );
}
